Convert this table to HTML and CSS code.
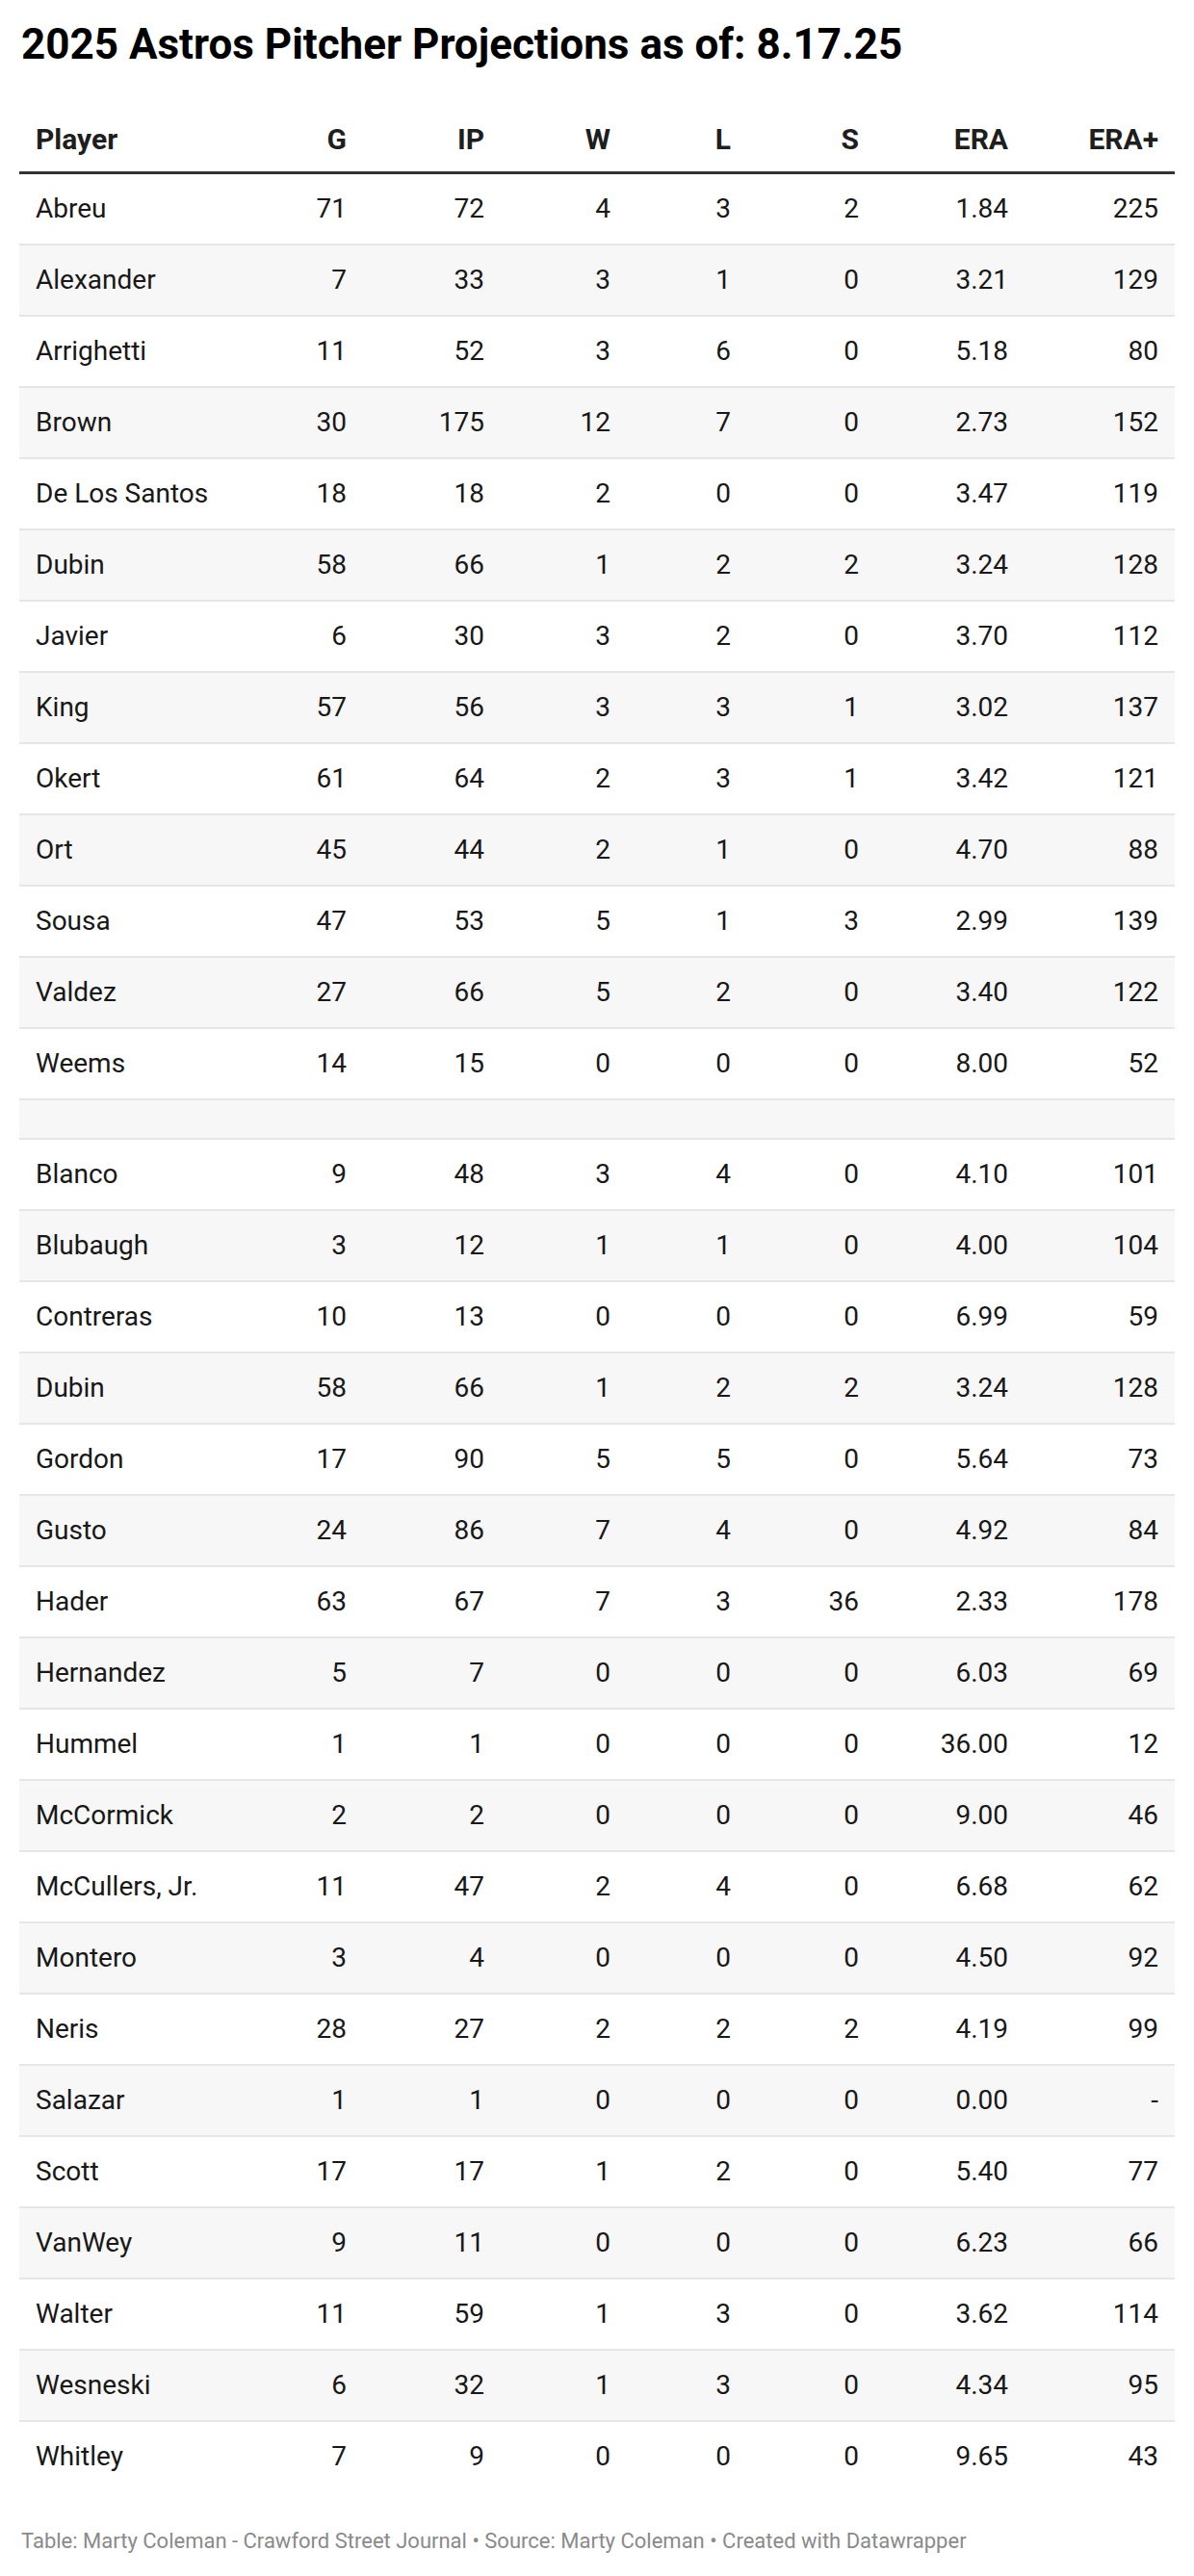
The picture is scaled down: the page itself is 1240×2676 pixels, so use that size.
FILE: index.html
```html
<!DOCTYPE html>
<html lang="en">
<head>
<meta charset="utf-8">
<title>2025 Astros Pitcher Projections</title>
<link rel="stylesheet" href="styles.css">
</head>
<body>
<div class="chart">
  <h1 class="title">2025 Astros Pitcher Projections as of: 8.17.25</h1>
  <table class="stats">
    <colgroup>
      <col class="c-player"><col class="c-g"><col class="c-ip"><col class="c-w"><col class="c-l"><col class="c-s"><col class="c-era"><col class="c-eraplus">
    </colgroup>
    <thead>
      <tr><th class="name">Player</th><th>G</th><th>IP</th><th>W</th><th>L</th><th>S</th><th>ERA</th><th>ERA+</th></tr>
    </thead>
    <tbody>
      <tr><td class="name">Abreu</td><td>71</td><td>72</td><td>4</td><td>3</td><td>2</td><td>1.84</td><td>225</td></tr>
      <tr><td class="name">Alexander</td><td>7</td><td>33</td><td>3</td><td>1</td><td>0</td><td>3.21</td><td>129</td></tr>
      <tr><td class="name">Arrighetti</td><td>11</td><td>52</td><td>3</td><td>6</td><td>0</td><td>5.18</td><td>80</td></tr>
      <tr><td class="name">Brown</td><td>30</td><td>175</td><td>12</td><td>7</td><td>0</td><td>2.73</td><td>152</td></tr>
      <tr><td class="name">De Los Santos</td><td>18</td><td>18</td><td>2</td><td>0</td><td>0</td><td>3.47</td><td>119</td></tr>
      <tr><td class="name">Dubin</td><td>58</td><td>66</td><td>1</td><td>2</td><td>2</td><td>3.24</td><td>128</td></tr>
      <tr><td class="name">Javier</td><td>6</td><td>30</td><td>3</td><td>2</td><td>0</td><td>3.70</td><td>112</td></tr>
      <tr><td class="name">King</td><td>57</td><td>56</td><td>3</td><td>3</td><td>1</td><td>3.02</td><td>137</td></tr>
      <tr><td class="name">Okert</td><td>61</td><td>64</td><td>2</td><td>3</td><td>1</td><td>3.42</td><td>121</td></tr>
      <tr><td class="name">Ort</td><td>45</td><td>44</td><td>2</td><td>1</td><td>0</td><td>4.70</td><td>88</td></tr>
      <tr><td class="name">Sousa</td><td>47</td><td>53</td><td>5</td><td>1</td><td>3</td><td>2.99</td><td>139</td></tr>
      <tr><td class="name">Valdez</td><td>27</td><td>66</td><td>5</td><td>2</td><td>0</td><td>3.40</td><td>122</td></tr>
      <tr><td class="name">Weems</td><td>14</td><td>15</td><td>0</td><td>0</td><td>0</td><td>8.00</td><td>52</td></tr>
      <tr class="spacer"><td></td><td></td><td></td><td></td><td></td><td></td><td></td><td></td></tr>
      <tr><td class="name">Blanco</td><td>9</td><td>48</td><td>3</td><td>4</td><td>0</td><td>4.10</td><td>101</td></tr>
      <tr><td class="name">Blubaugh</td><td>3</td><td>12</td><td>1</td><td>1</td><td>0</td><td>4.00</td><td>104</td></tr>
      <tr><td class="name">Contreras</td><td>10</td><td>13</td><td>0</td><td>0</td><td>0</td><td>6.99</td><td>59</td></tr>
      <tr><td class="name">Dubin</td><td>58</td><td>66</td><td>1</td><td>2</td><td>2</td><td>3.24</td><td>128</td></tr>
      <tr><td class="name">Gordon</td><td>17</td><td>90</td><td>5</td><td>5</td><td>0</td><td>5.64</td><td>73</td></tr>
      <tr><td class="name">Gusto</td><td>24</td><td>86</td><td>7</td><td>4</td><td>0</td><td>4.92</td><td>84</td></tr>
      <tr><td class="name">Hader</td><td>63</td><td>67</td><td>7</td><td>3</td><td>36</td><td>2.33</td><td>178</td></tr>
      <tr><td class="name">Hernandez</td><td>5</td><td>7</td><td>0</td><td>0</td><td>0</td><td>6.03</td><td>69</td></tr>
      <tr><td class="name">Hummel</td><td>1</td><td>1</td><td>0</td><td>0</td><td>0</td><td>36.00</td><td>12</td></tr>
      <tr><td class="name">McCormick</td><td>2</td><td>2</td><td>0</td><td>0</td><td>0</td><td>9.00</td><td>46</td></tr>
      <tr><td class="name">McCullers, Jr.</td><td>11</td><td>47</td><td>2</td><td>4</td><td>0</td><td>6.68</td><td>62</td></tr>
      <tr><td class="name">Montero</td><td>3</td><td>4</td><td>0</td><td>0</td><td>0</td><td>4.50</td><td>92</td></tr>
      <tr><td class="name">Neris</td><td>28</td><td>27</td><td>2</td><td>2</td><td>2</td><td>4.19</td><td>99</td></tr>
      <tr><td class="name">Salazar</td><td>1</td><td>1</td><td>0</td><td>0</td><td>0</td><td>0.00</td><td>-</td></tr>
      <tr><td class="name">Scott</td><td>17</td><td>17</td><td>1</td><td>2</td><td>0</td><td>5.40</td><td>77</td></tr>
      <tr><td class="name">VanWey</td><td>9</td><td>11</td><td>0</td><td>0</td><td>0</td><td>6.23</td><td>66</td></tr>
      <tr><td class="name">Walter</td><td>11</td><td>59</td><td>1</td><td>3</td><td>0</td><td>3.62</td><td>114</td></tr>
      <tr><td class="name">Wesneski</td><td>6</td><td>32</td><td>1</td><td>3</td><td>0</td><td>4.34</td><td>95</td></tr>
      <tr><td class="name">Whitley</td><td>7</td><td>9</td><td>0</td><td>0</td><td>0</td><td>9.65</td><td>43</td></tr>
    </tbody>
  </table>
  <p class="footer">Table: Marty Coleman - Crawford Street Journal • Source: Marty Coleman • Created with Datawrapper</p>
</div>
</body>
</html>
```

FILE: styles.css
```css
html, body {
  margin: 0;
  padding: 0;
  background: #ffffff;
}

body {
  font-family: Roboto, "Liberation Sans", Arial, sans-serif;
  color: #181818;
}

.chart {
  width: 1200px;
  margin-left: 20px;
  padding-top: 20px;
}

.title {
  margin: 0 0 0 2px;
  font-size: 44px;
  line-height: 52px;
  font-weight: 700;
  color: #000000;
}

.stats {
  margin-top: 41px;
  width: 1200px;
  border-collapse: collapse;
  table-layout: fixed;
  font-size: 28px;
}

.c-player { width: 240px; }
.c-g { width: 117px; }
.c-ip { width: 143px; }
.c-w { width: 131px; }
.c-l { width: 125px; }
.c-s { width: 133px; }
.c-era { width: 155px; }
.c-eraplus { width: 156px; }

.stats th {
  padding: 14px 17px 16px 17px;
  font-size: 30px;
  line-height: 35px;
  font-weight: 700;
  color: #1e1e1e;
  text-align: right;
  vertical-align: bottom;
  border-bottom: 3px solid #333333;
}

.stats td {
  padding: 20px 17px;
  line-height: 32px;
  text-align: right;
  white-space: nowrap;
}

.stats .name {
  text-align: left;
}

.stats tbody tr + tr td {
  border-top: 2px solid #e6e6e6;
}

.stats tbody tr:nth-child(even) {
  background: #f7f7f7;
}

.stats tr.spacer td {
  height: 41px;
  padding: 0;
  box-sizing: border-box;
}

.footer {
  margin: 39px 0 0 2px;
  font-size: 22px;
  line-height: 26px;
  color: #8a8a8a;
}
```
